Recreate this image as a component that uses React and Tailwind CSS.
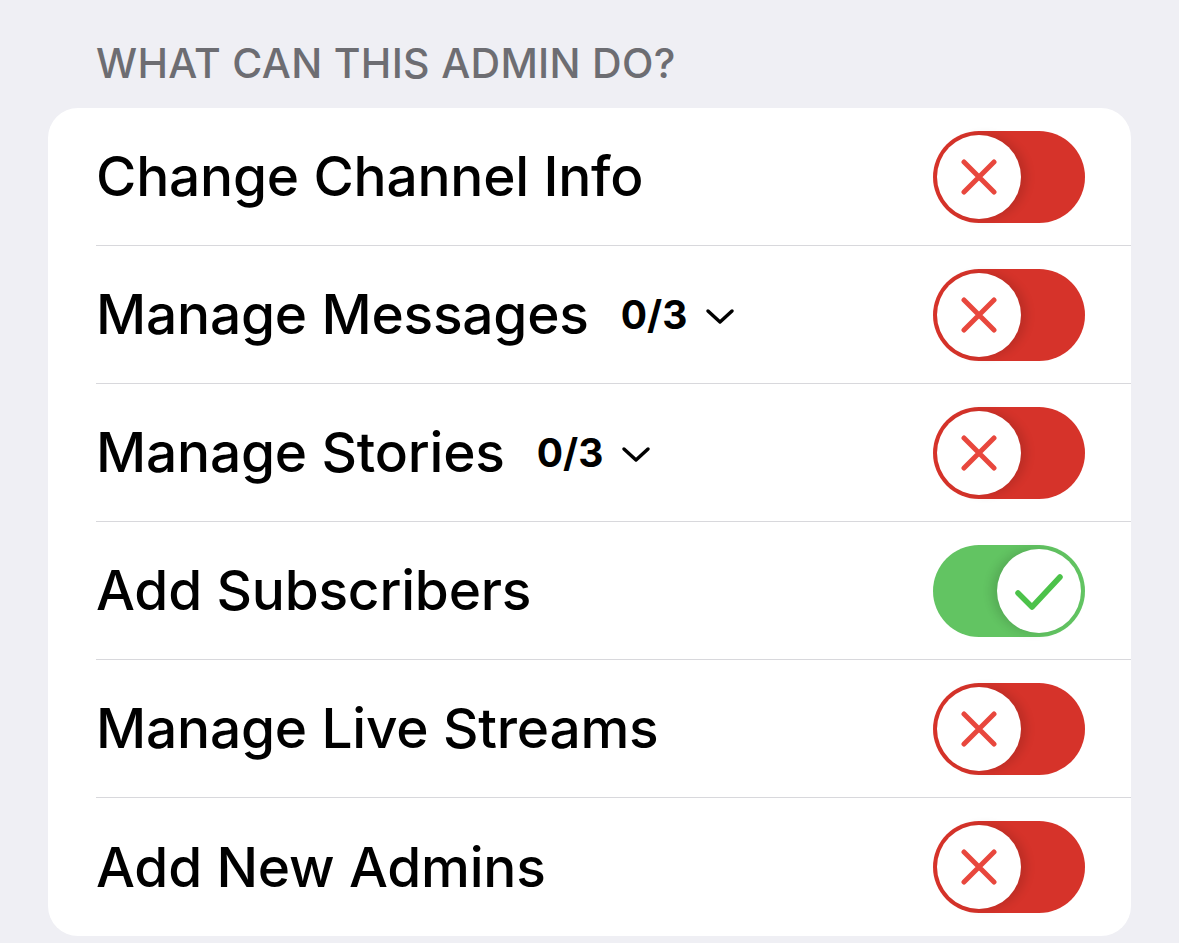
import React from 'react';

const rows = [
  { label: 'Change Channel Info', on: false },
  { label: 'Manage Messages', count: '0/3', on: false },
  { label: 'Manage Stories', count: '0/3', on: false },
  { label: 'Add Subscribers', on: true },
  { label: 'Manage Live Streams', on: false },
  { label: 'Add New Admins', on: false },
];

function Toggle({ on }) {
  return (
    <div
      className={`relative w-[152px] h-[92px] rounded-full flex items-center px-[4px] ${
        on ? 'bg-[#62c462] justify-end' : 'bg-[#d6332a] justify-start'
      }`}
    >
      <div
        className={`w-[84px] h-[84px] rounded-full bg-white flex items-center justify-center ${
          on ? 'shadow-[-6px_0_10px_rgba(0,0,0,0.12)]' : 'shadow-[6px_0_10px_rgba(0,0,0,0.12)]'
        }`}
      >
        {on ? (
          <svg width="52" height="44" viewBox="0 0 52 44" fill="none" className="mt-[2px]">
            <path d="M5 23 L19 37 L47 7" stroke="#4cc24a" strokeWidth="5.5" strokeLinecap="round" strokeLinejoin="round" />
          </svg>
        ) : (
          <svg width="36" height="36" viewBox="0 0 36 36" fill="none">
            <path d="M3 3 L33 33 M33 3 L3 33" stroke="#e8473d" strokeWidth="5" strokeLinecap="round" />
          </svg>
        )}
      </div>
    </div>
  );
}

export default function App() {
  return (
    <div className="w-[1179px] h-[943px] bg-[#efeff4] px-[48px] pt-[39px] font-['Inter',sans-serif] overflow-hidden">
      <div className="pl-[48px] text-[41px] leading-[48px] font-medium text-[#6d6d72] tracking-[0.3px]">
        WHAT CAN THIS ADMIN DO?
      </div>
      <div className="mt-[21px] bg-white rounded-[30px] overflow-hidden">
        {rows.map((row, i) => (
          <div key={row.label} className="pl-[48px]">
            <div
              className={`h-[138px] flex items-center pr-[46px] ${
                i < rows.length - 1 ? 'border-b-[1.5px] border-[#d8d8dc]' : ''
              }`}
            >
              <div className="flex-1 flex items-center gap-[32px]">
                <span className="text-[55px] font-medium text-black tracking-[-0.2px]">{row.label}</span>
                {row.count && (
                  <span className="flex items-center gap-[18px] pt-[2px]">
                    <span className="text-[39px] font-bold text-black">{row.count}</span>
                    <svg width="30" height="20" viewBox="0 0 30 20" fill="none">
                      <path d="M3 5 L15 16 L27 5" stroke="#000" strokeWidth="3.5" strokeLinecap="round" strokeLinejoin="round" />
                    </svg>
                  </span>
                )}
              </div>
              <Toggle on={row.on} />
            </div>
          </div>
        ))}
      </div>
    </div>
  );
}
